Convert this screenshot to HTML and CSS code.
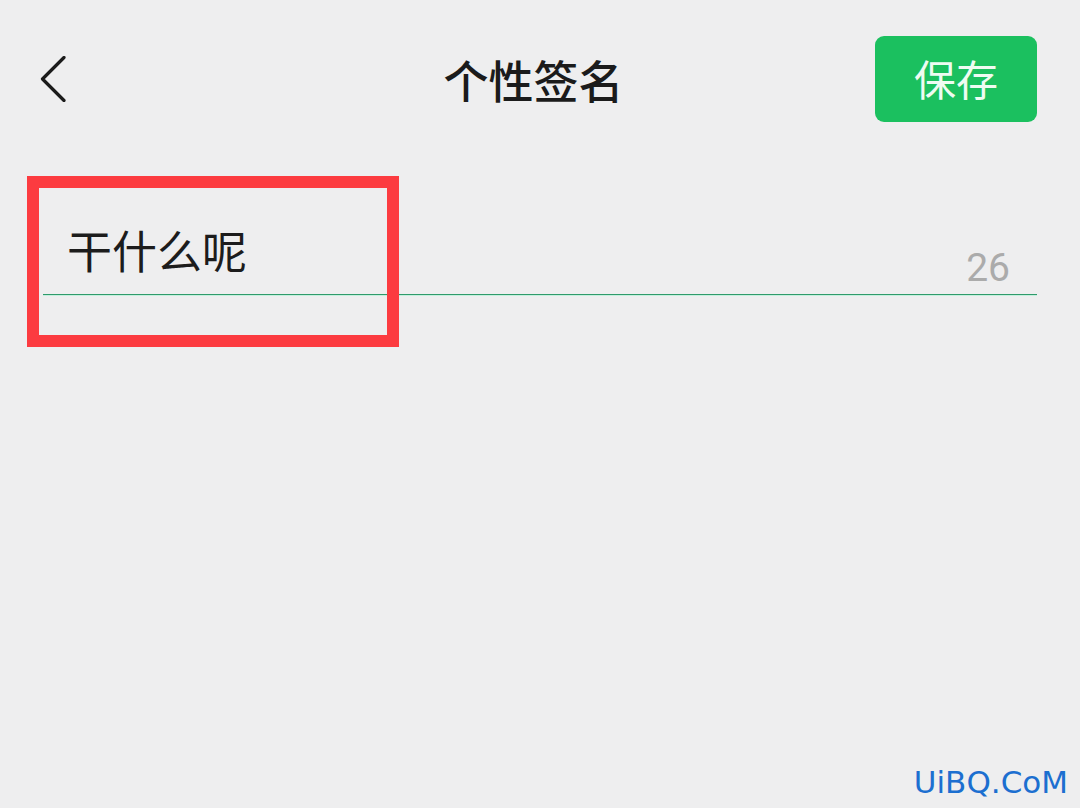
FILE: index.html
```html
<!DOCTYPE html>
<html lang="zh-CN">
<head>
    <meta charset="UTF-8">
    <meta name="viewport" content="width=device-width, initial-scale=1.0">
    <title>个性签名</title>
    <link rel="stylesheet" href="styles.css">
</head>
<body>
    <header class="nav">
        <button class="back-btn" aria-label="返回">
            <svg width="26" height="46" viewBox="0 0 26 46">
                <polyline points="24,1.5 2.5,23 24,44.5" fill="none" stroke="#1b1b1b" stroke-width="3.2" stroke-linecap="round" stroke-linejoin="round"/>
            </svg>
        </button>
        <h1 class="title">个性签名</h1>
        <button class="save-btn">保存</button>
    </header>

    <main class="editor">
        <div class="field">
            <span class="field-text">干什么呢</span>
            <span class="count">26</span>
        </div>
    </main>

    <!-- 标注框 -->
    <div class="mark"></div>

    <div class="watermark">UiBQ.CoM</div>
</body>
</html>
```

FILE: styles.css
```css
* { box-sizing: border-box; margin: 0; padding: 0; }

body {
    font-family: "Noto Sans CJK SC", "Noto Sans", sans-serif;
    background: #eeeeef;
    color: #1b1b1b;
    width: 1080px;
    height: 808px;
    overflow: hidden;
    position: relative;
}

/* 顶部导航 */
.nav {
    display: grid;
    grid-template-columns: 1fr auto 1fr;
    align-items: center;
    height: 86px;
    margin-top: 36px;
    padding: 0 43px 0 40px;
}
.back-btn {
    justify-self: start;
    border: none;
    background: none;
    width: 26px;
    height: 46px;
    display: flex;
}
.title {
    font-size: 45px;
    font-weight: 500;
    line-height: 1;
    margin-right: 10px;
}
.save-btn {
    justify-self: end;
    width: 162px;
    height: 86px;
    border: none;
    border-radius: 9px;
    background: #1bc05f;
    color: #eefcf2;
    font-family: inherit;
    font-size: 42px;
    line-height: 1;
    padding-bottom: 2px;
}

/* 输入区 */
.editor {
    margin-top: 105px;
    padding: 0 43px;
}
.field {
    display: flex;
    justify-content: space-between;
    align-items: flex-end;
    border-bottom: 1px solid #2f9a6b;
    box-shadow: 0 1px 0 #c4efdd;
    padding: 0 27px 0 24px;
}
.field-text {
    font-size: 45px;
    line-height: 1;
    margin-bottom: 22px;
    color: #1c1c1c;
}
.count {
    font-family: Roboto, "Liberation Sans", sans-serif;
    font-size: 39px;
    line-height: 1;
    color: #ababab;
    margin-bottom: 6px;
}

/* 红色标注 */
.mark {
    position: absolute;
    left: 27px;
    top: 176px;
    width: 372px;
    height: 171px;
    border: 12px solid #fc3b40;
}

.watermark {
    position: absolute;
    right: 12px;
    bottom: 8px;
    font-family: "DejaVu Sans", sans-serif;
    font-size: 31px;
    color: #1c6fd0;
}
```
